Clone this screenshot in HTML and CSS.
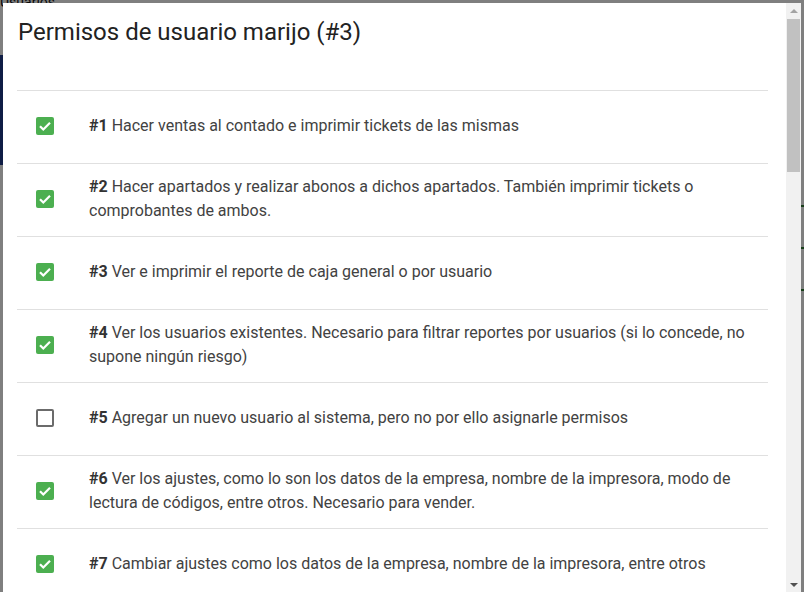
FILE: index.html
```html
<!DOCTYPE html>
<html lang="es">
<head>
    <meta charset="UTF-8">
    <meta name="viewport" content="width=device-width, initial-scale=1.0">
    <title>Permisos de usuario</title>
    <link rel="stylesheet" href="styles.css">
</head>
<body>
    <!-- pagina de fondo -->
    <div class="page">
        <div class="page-title">Usuarios</div>
        <div class="page-nav"></div>
        <div class="page-rows">
            <div class="page-row"></div>
            <div class="page-row"></div>
            <div class="page-row"></div>
        </div>
    </div>

    <div class="overlay"></div>

    <div class="modal">
        <div class="modal-scroll">
            <div class="modal-header">
                <h4>Permisos de usuario marijo (#3)</h4>
            </div>
            <ul class="perm-list">
                <li class="perm-row">
                    <span class="check on"><svg viewBox="0 0 18 18"><path d="M4 9.2l3.3 3.3L14 5.8"/></svg></span>
                    <p class="perm-text"><strong>#1</strong> Hacer ventas al contado e imprimir tickets de las mismas</p>
                </li>
                <li class="perm-row">
                    <span class="check on"><svg viewBox="0 0 18 18"><path d="M4 9.2l3.3 3.3L14 5.8"/></svg></span>
                    <p class="perm-text"><strong>#2</strong> Hacer apartados y realizar abonos a dichos apartados. También imprimir tickets o comprobantes de ambos.</p>
                </li>
                <li class="perm-row">
                    <span class="check on"><svg viewBox="0 0 18 18"><path d="M4 9.2l3.3 3.3L14 5.8"/></svg></span>
                    <p class="perm-text"><strong>#3</strong> Ver e imprimir el reporte de caja general o por usuario</p>
                </li>
                <li class="perm-row">
                    <span class="check on"><svg viewBox="0 0 18 18"><path d="M4 9.2l3.3 3.3L14 5.8"/></svg></span>
                    <p class="perm-text"><strong>#4</strong> Ver los usuarios existentes. Necesario para filtrar reportes por usuarios (si lo concede, no supone ningún riesgo)</p>
                </li>
                <li class="perm-row">
                    <span class="check"></span>
                    <p class="perm-text"><strong>#5</strong> Agregar un nuevo usuario al sistema, pero no por ello asignarle permisos</p>
                </li>
                <li class="perm-row">
                    <span class="check on"><svg viewBox="0 0 18 18"><path d="M4 9.2l3.3 3.3L14 5.8"/></svg></span>
                    <p class="perm-text"><strong>#6</strong> Ver los ajustes, como lo son los datos de la empresa, nombre de la impresora, modo de lectura de códigos, entre otros. Necesario para vender.</p>
                </li>
                <li class="perm-row">
                    <span class="check on"><svg viewBox="0 0 18 18"><path d="M4 9.2l3.3 3.3L14 5.8"/></svg></span>
                    <p class="perm-text"><strong>#7</strong> Cambiar ajustes como los datos de la empresa, nombre de la impresora, entre otros</p>
                </li>
            </ul>
        </div>
        <div class="scrollbar">
            <div class="sb-btn"><span class="arrow-up"></span></div>
            <div class="sb-track"><div class="sb-thumb"></div></div>
            <div class="sb-btn"><span class="arrow-down"></span></div>
        </div>
    </div>
</body>
</html>
```

FILE: styles.css
```css
* {
    margin: 0;
    padding: 0;
    box-sizing: border-box;
}

body {
    font-family: Roboto, "Liberation Sans", Arial, sans-serif;
    background-color: #fff;
    overflow: hidden;
}

/* pagina de fondo */
.page {
    height: 592px;
    display: flex;
    flex-direction: column;
}

.page-title {
    font-size: 14px;
    line-height: 4px;
    color: #111;
}

.page-nav {
    height: 110px;
    margin-top: 51px;
    width: 60px;
    background-color: #1f3a8a;
}

.page-rows {
    display: flex;
    flex-direction: column;
    gap: 40px;
    margin-top: 40px;
    align-items: flex-end;
}

.page-row {
    width: 10px;
    height: 2px;
    background-color: #2e7d32;
}

.overlay {
    position: fixed;
    inset: 0;
    background-color: rgba(0, 0, 0, 0.5);
}

/* modal */
.modal {
    position: fixed;
    top: 3px;
    left: 3px;
    width: 798px;
    bottom: 0;
    background-color: #fff;
    display: flex;
}

.modal-scroll {
    flex: 1;
    overflow: hidden;
    padding: 0 18px 0 14px;
}

.modal-header {
    padding: 14px 0 43px 1px;
}

.modal-header h4 {
    font-size: 24px;
    line-height: 30px;
    font-weight: 400;
    color: #222;
}

.perm-list {
    list-style: none;
}

.perm-row {
    display: flex;
    align-items: center;
    min-height: 73px;
    border-top: 1px solid #e0e0e0;
    padding: 0 10px 0 19px;
    gap: 35px;
}

.perm-text {
    font-size: 16px;
    line-height: 24px;
    color: #424242;
    margin-bottom: 3px;
}

.perm-text strong {
    font-weight: 700;
    color: #333;
}

.check {
    flex: none;
    width: 18px;
    height: 18px;
    border: 2px solid #6b6b6b;
    border-radius: 2px;
    margin-top: -2px;
}

.check.on {
    border: none;
    background-color: #4caf50;
}

.check svg {
    display: block;
    width: 18px;
    height: 18px;
    fill: none;
    stroke: #fff;
    stroke-width: 2.2;
}

/* barra de desplazamiento */
.scrollbar {
    width: 15px;
    flex: none;
    display: flex;
    flex-direction: column;
    background-color: #f1f1f1;
}

.sb-btn {
    height: 15px;
    display: flex;
    align-items: center;
    justify-content: center;
}

.arrow-up {
    border-left: 4px solid transparent;
    border-right: 4px solid transparent;
    border-bottom: 4px solid #a3a3a3;
}

.arrow-down {
    border-left: 4px solid transparent;
    border-right: 4px solid transparent;
    border-top: 4px solid #505050;
}

.sb-track {
    flex: 1;
    padding: 1px 1px 0 1px;
}

.sb-thumb {
    height: 153px;
    background-color: #c1c1c1;
}
```
